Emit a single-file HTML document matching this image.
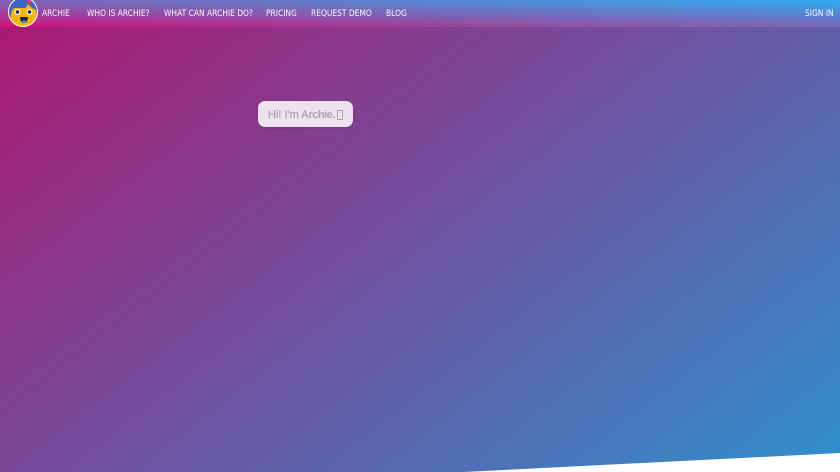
<!DOCTYPE html>
<html><head><meta charset="utf-8"><style>
html,body{margin:0;padding:0}
body{width:840px;height:472px;overflow:hidden;position:relative;background:#fff;font-family:"DejaVu Sans","Liberation Sans",sans-serif}
.bg{position:absolute;inset:0;background:linear-gradient(142deg,#b01270 0%,#2b90d0 100%)}
.dots{position:absolute;inset:0;background-image:repeating-conic-gradient(rgba(0,0,0,.04) 0 25%,rgba(255,255,255,.04) 0 50%);background-size:2px 2px}
.hdr{position:absolute;left:0;top:0;width:840px;height:27px;background:linear-gradient(to top right,#d0107a 0%,#8a58ae 40%,#2fadef 100%)}
.n{position:absolute;top:9px;font-size:8.7px;line-height:11px;color:#fff;opacity:.95;white-space:nowrap;transform:scaleX(.865);transform-origin:0 50%}
.bub{position:absolute;left:258px;top:101px;width:95px;height:26px;border-radius:7px;background:#eee2ee;box-shadow:0 1px 2px rgba(60,0,60,.2);color:#aea3b1;font:11px/26px "Liberation Sans",sans-serif;white-space:nowrap}
.bub span{position:absolute;top:1px}
.t{position:absolute;left:79px;top:9px;width:4px;height:8px;border:1px solid #aea3b1}
svg{position:absolute;left:0;top:0}
</style></head><body>
<div class="bg"></div><div class="dots"></div>
<div class="hdr"></div>
<svg width="840" height="472" viewBox="0 0 840 472">
<polygon points="464,472 840,453 840,472" fill="#fff"/>
<circle cx="23" cy="12" r="15" fill="#fff"/>
<clipPath id="c"><circle cx="23" cy="12" r="14"/></clipPath>
<g clip-path="url(#c)">
<rect x="8" y="-4" width="30" height="32" fill="#f6b40f"/>
<path d="M8 -4H38V18L36 10 32 8 28 4 25.500 8 14 8 11.500 11 10.500 18 8 18Z" fill="#3a66c4"/>
<path d="M27 -4L33 -4 30.500 4 28 4Z" fill="#e8327a"/>
<circle cx="17.500" cy="12" r="3" fill="#fff"/><circle cx="17.500" cy="12" r="1.800" fill="#2c2430"/>
<circle cx="29.500" cy="12" r="3" fill="#fff"/><circle cx="29.500" cy="12" r="1.800" fill="#2c2430"/>
<path d="M20 17H28Q27.500 23 24 23T20 17Z" fill="#12203c"/>
<path d="M22 21Q24 19.500 26.500 21 25 23 24 23T22 21Z" fill="#2ba6c9"/>
</g>
</svg>
<div class="n" style="left:42px">ARCHIE</div>
<div class="n" style="left:87px">WHO IS ARCHIE?</div>
<div class="n" style="left:164px">WHAT CAN ARCHIE DO?</div>
<div class="n" style="left:266px">PRICING</div>
<div class="n" style="left:311px">REQUEST DEMO</div>
<div class="n" style="left:386px">BLOG</div>
<div class="n" style="left:805px">SIGN IN</div>
<div class="bub"><span style="left:10px;-webkit-text-stroke:.3px #aea3b1">Hi! I'm</span><span style="left:43px;font-weight:bold;letter-spacing:-.5px">Archie.</span><i class="t"></i></div>
</body></html>
